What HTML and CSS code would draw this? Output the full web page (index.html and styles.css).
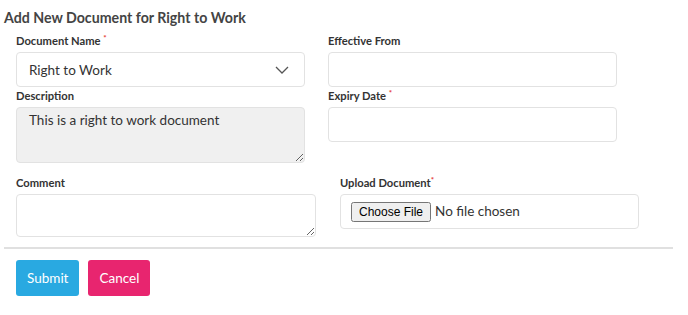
FILE: index.html
```html
<!DOCTYPE html>
<html lang="en">
<head>
    <meta charset="UTF-8">
    <title>Add New Document</title>
    <link rel="stylesheet" href="styles.css">
</head>
<body>
    <div class="container">
        <h4 class="title">Add New Document for Right to Work</h4>

        <div class="row row-top">
            <div class="col">
                <label>Document Name <span class="req">*</span></label>
                <div class="select">
                    <span>Right to Work</span>
                    <svg width="14" height="8" viewBox="0 0 14 8"><path d="M1 1 L7 7 L13 1" fill="none" stroke="#555" stroke-width="1.3"/></svg>
                </div>
                <label>Description</label>
                <textarea class="desc" readonly>This is a right to work document</textarea>
            </div>
            <div class="col">
                <label>Effective From</label>
                <input type="text" class="field">
                <label>Expiry Date <span class="req">*</span></label>
                <input type="text" class="field">
            </div>
        </div>

        <div class="row row-bottom">
            <div class="col">
                <label>Comment</label>
                <textarea class="comment"></textarea>
            </div>
            <div class="col">
                <label>Upload Document<span class="req">*</span></label>
                <div class="upload">
                    <input type="file">
                </div>
            </div>
        </div>

        <hr>

        <div class="actions">
            <button class="btn submit">Submit</button>
            <button class="btn cancel">Cancel</button>
        </div>
    </div>
</body>
</html>
```

FILE: styles.css
```css
body {
    margin: 0;
    font-family: Lato, sans-serif;
    color: #333;
    background: #fff;
}
.container {
    padding: 8px 15px 0 4px;
}
.title {
    margin: 0 0 5px 0;
    font-size: 14.2px;
    line-height: 20px;
    font-weight: 700;
    color: #444;
}
.row {
    display: grid;
    padding-left: 12px;
}
.row-top {
    grid-template-columns: 289px 289px;
    column-gap: 23px;
}
.row-bottom {
    grid-template-columns: 300px 299px;
    column-gap: 24px;
    margin-top: 12px;
}
.col {
    display: flex;
    flex-direction: column;
}
label {
    display: block;
    font-size: 11.2px;
    font-weight: 700;
    line-height: 16px;
    margin-bottom: 3px;
    color: #333;
}
.req {
    color: #e53935;
    font-size: 8px;
    vertical-align: top;
    line-height: 10px;
}
.select, .field, textarea, .upload {
    box-sizing: border-box;
    border: 1px solid #e2e2e2;
    border-radius: 4px;
    background: #fff;
    font-family: inherit;
}
.select {
    height: 35px;
    display: flex;
    align-items: center;
    justify-content: space-between;
    padding: 0 15px 0 12px;
    font-size: 13.5px;
    margin-bottom: 1px;
}
.field {
    height: 35px;
    width: 100%;
    margin: 0 0 1px 0;
    padding: 0 12px;
}
textarea {
    resize: vertical;
    width: 100%;
    padding: 4px 12px;
    font-size: 13.5px;
    color: #333;
}
.desc {
    height: 56px;
    background: #f0f0f0;
}
.comment {
    height: 43px;
}
.upload {
    height: 35px;
    display: flex;
    align-items: center;
    padding: 0 10px;
}
.upload input {
    font-family: inherit;
    font-size: 13.5px;
    color: #333;
}
.upload input::file-selector-button {
    font-family: "Liberation Sans", Arial, sans-serif;
    font-size: 12px;
}
hr {
    border: none;
    border-top: 2px solid #e0e0e0;
    margin: 10px 0 11px 0;
}
.actions {
    display: flex;
    gap: 9px;
    padding-left: 12px;
}
.btn {
    height: 36px;
    border: none;
    border-radius: 3px;
    color: #fff;
    font-family: inherit;
    font-size: 13.5px;
    padding: 0 11px;
}
.submit {
    background-color: #29a9e1;
}
.cancel {
    background-color: #e8256f;
}
```
